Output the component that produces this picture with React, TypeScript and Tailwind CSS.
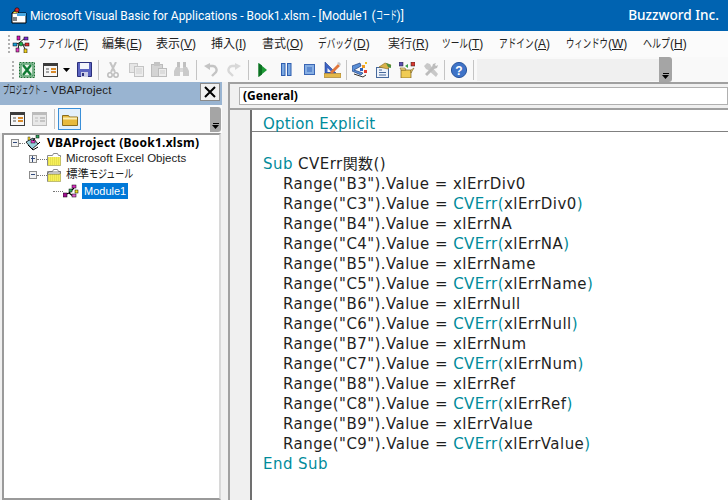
const ui = { fontFamily: '"Noto Sans", "Noto Sans CJK JP", sans-serif' };
const codeFont = { fontFamily: '"DejaVu Sans", "Noto Sans CJK JP", sans-serif' };
const treeFont = { fontFamily: '"Liberation Sans", "Noto Sans CJK JP", sans-serif' };
const titleFont = { fontFamily: 'Roboto, "Noto Sans CJK JP", sans-serif' };

const Narrow = ({ text, cls }: { text: string; cls: string }) => (
  <span className={`inline-block origin-left whitespace-nowrap ${cls}`}>{text}</span>
);

const kana4 = "w-[35px] scale-x-[0.72]";
const menus = [
  { label: <Narrow text="ファイル" cls={kana4} />, key: "F", cls: "w-[64px]" },
  { label: "編集", key: "E", cls: "w-[54px]" },
  { label: "表示", key: "V", cls: "w-[55px]" },
  { label: "挿入", key: "I", cls: "w-[51px]" },
  { label: "書式", key: "O", cls: "w-[56px]" },
  { label: <Narrow text="デバッグ" cls={kana4} />, key: "D", cls: "w-[70px]" },
  { label: "実行", key: "R", cls: "w-[54px]" },
  { label: <Narrow text="ツール" cls="w-[26px] scale-x-[0.72]" />, key: "T", cls: "w-[57px]" },
  { label: <Narrow text="アドイン" cls={kana4} />, key: "A", cls: "w-[67px]" },
  { label: <Narrow text="ウィンドウ" cls="w-[42px] scale-x-[0.7]" />, key: "W", cls: "w-[77px]" },
  { label: <Narrow text="ヘルプ" cls="w-[27px] scale-x-[0.75]" />, key: "H", cls: "w-[50px]" },
];

type Seg = { t: string; c?: boolean };
const blue = "text-[#008b9b]";

const code: { indent?: boolean; segs: Seg[] }[] = [
  { segs: [{ t: "Sub", c: true }, { t: " CVErr関数()" }] },
  ...[
    ["B3", "xlErrDiv0"],
    ["B4", "xlErrNA"],
    ["B5", "xlErrName"],
    ["B6", "xlErrNull"],
    ["B7", "xlErrNum"],
    ["B8", "xlErrRef"],
    ["B9", "xlErrValue"],
  ].flatMap(([cell, err]) => [
    { indent: true, segs: [{ t: `Range("${cell}").Value = ${err}` }] },
    {
      indent: true,
      segs: [
        { t: `Range("${cell.replace("B", "C")}").Value = ` },
        { t: "CVErr(", c: true },
        { t: err },
        { t: ")", c: true },
      ],
    },
  ]),
  { segs: [{ t: "End Sub", c: true }] },
];

const Sep = ({ cls }: { cls: string }) => <div className={`w-px h-[20px] bg-[#c4c4c4] ${cls}`} />;

const Grip = ({ cls }: { cls: string }) => (
  <div className={`flex flex-col gap-[2px] ${cls}`}>
    {[0, 1, 2, 3, 4].map((i) => (
      <div key={i} className="w-[2px] h-[2px] bg-[#b0b0b0]" />
    ))}
  </div>
);

const Overflow = ({ cls }: { cls: string }) => (
  <div className={`bg-[#a5a5a5] rounded-r-[3px] flex flex-col items-center justify-end pb-[3px] ${cls}`}>
    <div className="w-[6px] h-px bg-black mb-px" />
    <svg width="7" height="4" viewBox="0 0 7 4"><path d="M0 0h7L3.5 4z" fill="#000" /></svg>
  </div>
);

const AppLogo = ({ size = 18 }: { size?: number }) => (
  <svg width={size} height={size} viewBox="0 0 18 18" className="shrink-0">
    <path d="M2 6h14v10H2z" fill="#fff" stroke="#000" />
    <path d="M7 6h9v3H7z" fill="#4aa7e0" />
    <path d="M2 6l4-3 3 3" fill="#f2e24a" stroke="#000" />
    <circle cx="7" cy="3" r="2.2" fill="#d8242a" stroke="#000" strokeWidth=".6" />
    <path d="M3 11h4M3 13h4" stroke="#000" />
  </svg>
);

const MenuLogo = () => (
  <svg width="18" height="18" viewBox="0 0 18 18" className="shrink-0">
    <path d="M2 10l5-2 6-5M7 8l5 2 4-1M7 8l-1 7M11 10l3 6" stroke="#222" strokeWidth="1" fill="none" />
    <rect x="5" y="1" width="3" height="4" fill="#d61ab8" stroke="#000" strokeWidth=".5" />
    <rect x="12" y="2" width="4" height="3" fill="#7a2fd0" stroke="#000" strokeWidth=".5" />
    <rect x="1" y="8" width="4" height="3" fill="#1a9fd6" stroke="#000" strokeWidth=".5" />
    <circle cx="9" cy="9" r="2" fill="#1fb04a" stroke="#000" strokeWidth=".5" />
    <rect x="13" y="8" width="4" height="3" fill="#e03030" stroke="#000" strokeWidth=".5" />
    <rect x="12" y="14" width="3" height="4" fill="#f0d020" stroke="#000" strokeWidth=".5" />
    <rect x="4" y="13" width="3" height="4" fill="#e040c0" stroke="#000" strokeWidth=".5" />
  </svg>
);

const Excel = () => (
  <svg width="16" height="16" viewBox="0 0 16 16" className="shrink-0 ml-[5px]">
    <rect x=".5" y=".5" width="15" height="15" fill="#cfe8d2" stroke="#1d6f35" strokeDasharray="2 1" />
    <rect x="2" y="2" width="12" height="12" fill="#e8f3e8" stroke="#1d7a3c" />
    <path d="M4 3l8 10M12 3L4 13" stroke="#0f7a34" strokeWidth="2.4" />
  </svg>
);

const ViewIcon = ({ cls = "ml-[8px]", faded = false }: { cls?: string; faded?: boolean }) => (
  <svg width="15" height="14" viewBox="0 0 15 14" className={`shrink-0 ${cls}`}>
    <rect x=".5" y=".5" width="14" height="13" fill={faded ? "#e8e8e8" : "#f7f7f7"} stroke={faded ? "#bcbcbc" : "#3c3c3c"} />
    <rect x="1" y="1" width="13" height="2" fill={faded ? "#bcbcbc" : "#3c3c3c"} />
    <path d="M3 6h3M3 9h3" stroke={faded ? "#bcbcbc" : "#555"} />
    <path d="M8 6h5M8 9h5" stroke={faded ? "#c4c4c4" : "#d98a2b"} strokeWidth="2" />
  </svg>
);

const Save = () => (
  <svg width="15" height="15" viewBox="0 0 15 15" className="shrink-0 ml-[7px]">
    <path d="M.5.5h14v14H.5z" fill="#5a63c0" stroke="#2b2f7a" />
    <rect x="3" y="1" width="9" height="6" fill="#f2f4fb" />
    <rect x="4" y="10" width="7" height="5" fill="#c9cce6" />
    <rect x="5" y="11" width="2" height="3" fill="#2b2f7a" />
  </svg>
);

const Cut = () => (
  <svg width="12" height="16" viewBox="0 0 12 16" className="shrink-0 ml-[8px]">
    <path d="M3 0l5 10M9 0L4 10" stroke="#c4c4c4" strokeWidth="2" />
    <circle cx="3" cy="13" r="2.2" fill="none" stroke="#bcbcbc" strokeWidth="1.5" />
    <circle cx="9" cy="13" r="2.2" fill="none" stroke="#bcbcbc" strokeWidth="1.5" />
  </svg>
);

const Copy = () => (
  <svg width="15" height="14" viewBox="0 0 15 14" className="shrink-0 ml-[10px]">
    <rect x=".5" y=".5" width="8" height="9" fill="#e6e6e6" stroke="#c8c8c8" />
    <rect x="5.5" y="3.5" width="9" height="10" fill="#ededed" stroke="#c4c4c4" />
    <path d="M7 6h6M7 8h6M7 10h6" stroke="#d0d0d0" />
  </svg>
);

const Paste = () => (
  <svg width="16" height="15" viewBox="0 0 16 15" className="shrink-0 ml-[7px]">
    <rect x=".5" y="2.5" width="11" height="12" fill="#d4d4d4" stroke="#bcbcbc" />
    <rect x="3" y="0" width="6" height="4" fill="#c4c4c4" />
    <rect x="7.5" y="6.5" width="8" height="8" fill="#ececec" stroke="#bcbcbc" />
    <path d="M9 9h5M9 11h5" stroke="#cccccc" />
  </svg>
);

const Find = () => (
  <svg width="15" height="15" viewBox="0 0 15 15" className="shrink-0 ml-[7px]">
    <rect x="3" y="0" width="3" height="5" fill="#c0c0c0" />
    <rect x="9" y="0" width="3" height="5" fill="#c0c0c0" />
    <path d="M2 5h4v9H0V9zM13 5H9v9h6V9z" fill="#cacaca" />
    <rect x="6" y="6" width="3" height="4" fill="#d8d8d8" />
  </svg>
);

const Undo = ({ cls, flip = false }: { cls: string; flip?: boolean }) => (
  <svg width="14" height="14" viewBox="0 0 14 14" className={`shrink-0 ${cls} ${flip ? "-scale-x-100" : ""}`}>
    <path d="M4 3h5a4 4 0 0 1 3 6l-4 4" fill="none" stroke={flip ? "#d8d8d8" : "#c4c4c4"} strokeWidth="2.4" />
    <path d="M6 0v7L0 3z" fill={flip ? "#d8d8d8" : "#c4c4c4"} />
  </svg>
);

const Run = () => (
  <svg width="9" height="14" viewBox="0 0 9 14" className="shrink-0 ml-[9px]">
    <path d="M.5 0v14L9 7z" fill="#1d9a36" />
    <path d="M.5 0v14L4 11.5V2.5z" fill="#0c6f22" />
  </svg>
);

const Pause = () => (
  <svg width="11" height="13" viewBox="0 0 11 13" className="shrink-0 ml-[14px]">
    <rect x=".5" y=".5" width="3.5" height="12" fill="#7ba8e0" stroke="#2f5eb0" />
    <rect x="6.5" y=".5" width="3.5" height="12" fill="#7ba8e0" stroke="#2f5eb0" />
  </svg>
);

const Stop = () => (
  <svg width="11" height="11" viewBox="0 0 11 11" className="shrink-0 ml-[12px]">
    <rect x=".5" y=".5" width="10" height="10" fill="#86aee2" stroke="#3a66b4" />
    <rect x="3" y="3" width="5" height="5" fill="#5d8ad0" />
  </svg>
);

const Design = () => (
  <svg width="17" height="16" viewBox="0 0 17 16" className="shrink-0 ml-[9px]">
    <path d="M1 0l11 11H1z" fill="#3d63c4" stroke="#22408c" strokeWidth=".6" />
    <path d="M3.500 6l4 4h-4z" fill="#f4f4f4" />
    <rect x="0" y="11.500" width="17" height="4" fill="#e3b84a" stroke="#9a7420" strokeWidth=".6" />
    <path d="M6 10L14 2l2 2-8 8z" fill="#e0763c" />
    <path d="M13 1l2-1 2 2-1 2z" fill="#c7c7c7" />
  </svg>
);

const ProjectIcon = () => (
  <svg width="16" height="16" viewBox="0 0 16 16" className="shrink-0 ml-[5px]">
    <path d="M0 4l8-3 1 3-7 4 9 3-2 2-9-4z" fill="#5a8fd6" stroke="#1f3f80" strokeWidth=".7" />
    <rect x="10" y="3" width="3" height="3" fill="#f09b20" />
    <rect x="12" y="8" width="3" height="3" fill="#e03a30" />
    <rect x="8" y="6" width="3" height="3" fill="#2d62c0" />
    <rect x="13" y="0" width="2" height="2" fill="#f0c020" />
    <path d="M2 12l9 3 3-2" stroke="#333" fill="none" />
  </svg>
);

const Props = () => (
  <svg width="16" height="16" viewBox="0 0 16 16" className="shrink-0 ml-[8px]">
    <rect x=".5" y="5.500" width="12" height="10" fill="#eef3fa" stroke="#47699c" />
    <path d="M3 8h3M3 10.500h7M3 13h7" stroke="#47699c" />
    <path d="M3 5l6-4 6 2-3 4z" fill="#d9b24a" stroke="#8a6a20" strokeWidth=".6" />
    <path d="M10 1l5 2v3l-3-1z" fill="#4d8f3d" />
  </svg>
);

const ObjectIcon = () => (
  <svg width="16" height="16" viewBox="0 0 16 16" className="shrink-0 ml-[7px]">
    <rect x="0" y="0" width="4" height="4" fill="#5b4fb0" stroke="#222" strokeWidth=".5" />
    <rect x="12" y="0" width="4" height="4" fill="#d83a30" stroke="#222" strokeWidth=".5" />
    <path d="M9 2l-3 2 3 2z" fill="#38a048" />
    <path d="M2 8h10v8H2z" fill="#f0cc55" stroke="#7a6020" strokeWidth=".7" />
    <path d="M1 6h5l1 2H2zM12 8l3-2-3 5z" fill="#f7e08a" stroke="#7a6020" strokeWidth=".6" />
  </svg>
);

const Tools = () => (
  <svg width="14" height="14" viewBox="0 0 14 14" className="shrink-0 ml-[9px]">
    <path d="M0 3l3-3 3 1 1 2 7 8-2 3-8-7-2-1z" fill="#c8c8c8" />
    <path d="M9 1l3-1-1 2 1 1 2-1-1 3-3 1-7 7-2-2 7-7z" fill="#bcbcbc" />
  </svg>
);

const Help = () => (
  <svg width="16" height="16" viewBox="0 0 16 16" className="shrink-0 ml-[6px]">
    <circle cx="8" cy="8" r="7.600" fill="#3f74c8" stroke="#2a559c" />
    <text x="8" y="12.500" textAnchor="middle" fontSize="12" fontWeight="700" fill="#fff" fontFamily="Liberation Sans, sans-serif">?</text>
  </svg>
);

const Expander = ({ minus }: { minus: boolean }) => (
  <div className="w-[8px] h-[8px] border border-[#8c8c8c] bg-[#f2f2f2] relative shrink-0">
    <div className="absolute left-[1px] right-[1px] top-[2px] h-px bg-[#314a7c]" />
    {!minus && <div className="absolute top-[0px] bottom-[0px] left-[2px] w-px bg-[#314a7c]" />}
  </div>
);

const Dots = ({ cls }: { cls: string }) => <div className={`h-px border-t border-dotted border-[#777] shrink-0 ${cls}`} />;

const Folder = ({ open = false }: { open?: boolean }) => (
  <svg width="14" height="13" viewBox="0 0 14 13" className="shrink-0">
    <path d="M.5 2.500h5l1-2h4l1 2h2v10H.5z" fill="#fff" stroke="#8a8a8a" />
    <rect x="1" y="4" width="12.500" height="8.500" fill="#f6f05a" />
    <path d="M1 5h12.500M1 7h12.500M1 9h12.500M1 11h12.500" stroke="#d8cf3e" strokeDasharray="1 1" />
    {open && <path d="M.5 4l2-1h11.500l-1 2H.5z" fill="#fff" stroke="#555" strokeWidth=".7" />}
  </svg>
);

const ProjectTreeIcon = () => (
  <svg width="17" height="17" viewBox="0 0 17 17" className="shrink-0">
    <path d="M1 7l7-4 5 6-6 5z" fill="#9ad0dc" stroke="#000" strokeWidth=".8" />
    <path d="M3 10l5 5 5-3" fill="none" stroke="#000" />
    <rect x="11" y="0" width="3" height="3" fill="#33a860" stroke="#000" strokeWidth=".5" />
    <rect x="6" y="5" width="4" height="3" fill="#e040c0" stroke="#000" strokeWidth=".5" />
    <path d="M10 3l-2 3M13 9l2-2" stroke="#000" />
    <rect x="3" y="2" width="2" height="3" fill="#ffe030" stroke="#000" strokeWidth=".4" />
  </svg>
);

const ModuleIcon = () => (
  <svg width="16" height="14" viewBox="0 0 16 14" className="shrink-0">
    <path d="M1 11l5-2 5-5M6 9l4 3" stroke="#000" strokeWidth="1.200" fill="none" />
    <rect x="9" y="1" width="4" height="3" fill="#d830c0" stroke="#000" strokeWidth=".5" />
    <rect x="0" y="9" width="4" height="4" fill="#a01090" stroke="#000" strokeWidth=".5" />
    <rect x="6" y="5" width="3" height="3" fill="#30b060" stroke="#000" strokeWidth=".5" />
    <rect x="12" y="6" width="3" height="3" fill="#f0e020" stroke="#000" strokeWidth=".5" />
    <rect x="9" y="10" width="4" height="3" fill="#e060d0" stroke="#000" strokeWidth=".5" />
  </svg>
);

const treeText = "text-[11.500px] leading-none text-[#222]";

export default function App() {
  return (
    <div className="w-[728px] h-[500px] overflow-hidden flex flex-col bg-[#f0f0f0]" style={ui}>
      {/* title bar */}
      <div className="h-[31px] bg-[#0063b1] flex items-center pl-[10px] pr-[9px] text-white shrink-0">
        <AppLogo />
        <span className="ml-[2px] whitespace-nowrap text-[12px]" style={titleFont}>
          Microsoft Visual Basic for Applications - Book1.xlsm - [Module1 (<Narrow text="コード" cls="w-[21px] scale-x-[0.58]" />)]
        </span>
        <span className="ml-auto font-medium text-[13.600px]">Buzzword Inc.</span>
      </div>

      {/* menu */}
      <div className="h-[26px] bg-[#fbfbfb] flex items-center pl-[8px] shrink-0">
        <Grip cls="mr-[2px]" />
        <MenuLogo />
        <div className="flex ml-[8px] text-[12px] text-[#222]" style={treeFont}>
          {menus.map((m) => (
            <div key={m.key} className={`${m.cls} whitespace-nowrap`}>
              {m.label}(<span className="underline">{m.key}</span>)
            </div>
          ))}
        </div>
      </div>

      {/* toolbar */}
      <div className="h-[25px] bg-[#f9f9f9] flex items-center pl-[12px] shrink-0">
        <Grip cls="" />
        <Excel />
        <ViewIcon />
        <svg width="7" height="4" viewBox="0 0 7 4" className="shrink-0 ml-[5px]"><path d="M0 0h7L3.500 4z" fill="#000" /></svg>
        <Save />
        <Sep cls="ml-[6px]" />
        <Cut />
        <Copy />
        <Paste />
        <Find />
        <Sep cls="ml-[7px]" />
        <Undo cls="ml-[7px]" />
        <Undo cls="ml-[9px]" flip />
        <Sep cls="ml-[7px]" />
        <Run />
        <Pause />
        <Stop />
        <Design />
        <Sep cls="ml-[5px]" />
        <ProjectIcon />
        <Props />
        <ObjectIcon />
        <Tools />
        <Sep cls="ml-[6px]" />
        <Help />
        <Sep cls="ml-[6px]" />
        <div className="ml-[3px] w-[182px] h-[22px] bg-[#f0f0f0]" />
        <Overflow cls="w-[13px] h-[25px]" />
      </div>

      <div className="flex-1 min-h-0 flex">
        {/* project panel */}
        <div className="w-[222px] shrink-0 flex flex-col">
          <div className="h-[23px] bg-[#99b4d1] flex items-start pl-[3px] pr-[2px] pt-[1px] shrink-0">
            <span className="text-[11.500px] leading-[14px] tracking-[0.2px] text-[#222] whitespace-nowrap" style={treeFont}>
              <Narrow text="プロジェクト" cls="w-[37px] scale-x-[0.54]" /> - VBAProject
            </span>
            <div className="ml-auto w-[20px] h-[18px] bg-[#f0f0f0] border border-[#8a8a8a] flex items-center justify-center">
              <svg width="12" height="12" viewBox="0 0 12 12"><path d="M1 1l10 10M11 1L1 11" stroke="#000" strokeWidth="2" /></svg>
            </div>
          </div>
          <div className="h-[28px] bg-[#fbfbfb] flex items-center pl-[10px] shrink-0">
            <ViewIcon cls="" />
            <ViewIcon cls="ml-[7px]" faded />
            <Sep cls="ml-[7px]" />
            <div className="ml-[3px] w-[23px] h-[22px] border border-[#3a8fd8] bg-[#e3f0fb] flex items-center justify-center">
              <svg width="16" height="13" viewBox="0 0 16 13">
                <path d="M.5 2.500h6l1 1.500h8v8.500H.5z" fill="#e7b93c" stroke="#8a6c1e" />
                <rect x="1" y="4.500" width="14" height="2" fill="#fbeeb0" />
              </svg>
            </div>
            <Overflow cls="ml-auto w-[11px] h-[25px] mr-[1px]" />
          </div>
          <div className="flex-1 min-h-0 bg-white border-2 border-[#9a9a9a] border-r-[#d8d8d8] ml-[2px] mr-[1px]">
            <div className="flex items-center h-[16px] pl-[7px]">
              <Expander minus />
              <Dots cls="w-[6px]" />
              <ProjectTreeIcon />
              <span className="ml-[5px] text-[12px] font-bold text-black whitespace-nowrap tracking-[0.25px]">VBAProject (Book1.xlsm)</span>
            </div>
            <div className="flex items-center h-[16px] pl-[25px]" style={treeFont}>
              <Expander minus={false} />
              <Dots cls="w-[10px]" />
              <Folder />
              <span className={`ml-[5px] ${treeText} whitespace-nowrap`}>Microsoft Excel Objects</span>
            </div>
            <div className="flex items-center h-[16px] pl-[25px]" style={treeFont}>
              <Expander minus />
              <Dots cls="w-[10px]" />
              <Folder open />
              <span className={`ml-[5px] ${treeText} whitespace-nowrap`}>
                標準<Narrow text="モジュール" cls="w-[45px] scale-x-[0.78]" />
              </span>
            </div>
            <div className="flex items-center h-[16px] pl-[49px]" style={treeFont}>
              <Dots cls="w-[10px]" />
              <ModuleIcon />
              <span className="ml-[3px] px-[2px] h-[16px] leading-[16px] bg-[#0078d7] text-white text-[11px] whitespace-nowrap">Module1</span>
            </div>
          </div>
        </div>

        {/* splitter */}
        <div className="w-[6px] shrink-0 bg-[#f0f0f0]" />

        {/* code window */}
        <div className="flex-1 min-w-0 flex flex-col border-l-2 border-t-2 border-[#a0a0a0]">
          <div className="h-[24px] bg-[#f0f0f0] pl-[9px] pt-[3px] shrink-0">
            <div className="h-[18px] bg-white border border-[#b0b0b0] pl-[3px] flex items-center text-[12px] font-bold text-black">(General)</div>
          </div>
          <div className="flex-1 min-h-0 flex border-t-2 border-[#a0a0a0]">
            <div className="w-[22px] bg-[#f0f0f0] border-r-2 border-[#707070] shrink-0" />
            <div className="flex-1 min-w-0 bg-white text-[15px] leading-[20px] tracking-[0.45px] text-[#1f1f1f] whitespace-nowrap" style={codeFont}>
              <div className={`h-[22px] border-b border-[#808080] pl-[11px] pt-[4px] tracking-[0.2px] ${blue}`}>Option Explicit</div>
              <div className="pt-[22px]">
                {code.map((line, i) => (
                  <div key={i} className={line.indent ? "pl-[31px]" : "pl-[11px]"}>
                    {line.segs.map((s, j) => (
                      <span key={j} className={s.c ? blue : ""}>{s.t}</span>
                    ))}
                  </div>
                ))}
              </div>
            </div>
          </div>
        </div>
      </div>
    </div>
  );
}
